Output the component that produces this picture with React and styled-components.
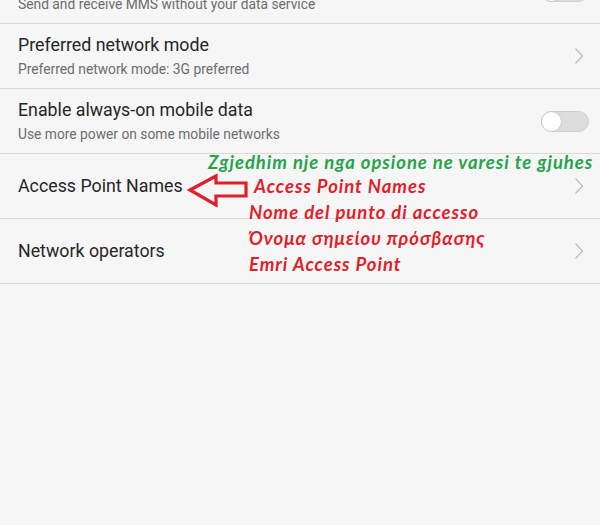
import React from "react";
import styled, { createGlobalStyle } from "styled-components";

const Global = createGlobalStyle`
  html, body { margin: 0; padding: 0; background: #ffffff; }
  body { font-family: Roboto, "Noto Sans", "Liberation Sans", sans-serif; }
`;

const Screen = styled.div`
  position: relative;
  width: 600px;
  height: 525px;
  background: #f6f6f6;
  overflow: hidden;
`;

const List = styled.div`
  display: flex;
  flex-direction: column;
  margin-top: -41px;
`;

const Row = styled.div`
  box-sizing: border-box;
  height: 65px;
  display: flex;
  align-items: center;
  justify-content: space-between;
  padding: 0 12px 0 18px;
  border-bottom: 1.5px solid #d9d9d9;
`;

const Texts = styled.div`
  display: flex;
  flex-direction: column;
  gap: ${(p) => (p.$sub ? "5px" : "0")};
`;

const Title = styled.div`
  font-size: 17.8px;
  line-height: 22px;
  min-height: 22px;
  color: #262626;
`;

const Subtitle = styled.div`
  font-size: 13.8px;
  line-height: 17px;
  color: #6d6d6d;
`;

const Toggle = styled.div`
  box-sizing: border-box;
  width: 48px;
  height: 21px;
  border-radius: 11px;
  background: #dcdcdc;
  border: 1px solid #cfcfcf;
  position: relative;
  margin-right: -1px;
`;

const Knob = styled.div`
  box-sizing: border-box;
  position: absolute;
  left: -1px;
  top: -1px;
  width: 21px;
  height: 21px;
  border-radius: 50%;
  background: #ffffff;
  border: 1px solid #c8c8c8;
`;

const ChevronSvg = styled.svg`
  margin-right: 4px;
`;

const Chevron = () => (
  <ChevronSvg width="10" height="18" viewBox="0 0 10 18">
    <path d="M1.5 1.5 L8.5 9 L1.5 16.5" fill="none" stroke="#bdbdbd" strokeWidth="1.3" />
  </ChevronSvg>
);

const Notes = styled.div`
  position: absolute;
  left: 186px;
  top: 151px;
  display: grid;
  grid-template-columns: 63px auto;
  grid-template-rows: 24px repeat(4, 26px);
  font-family: Lato, "Open Sans", sans-serif;
  font-style: italic;
  font-weight: 700;
  font-size: 18.5px;
  letter-spacing: 0.95px;
  line-height: 22px;
  white-space: nowrap;
`;

const Note = styled.div`
  grid-column: ${(p) => (p.$wide ? "1 / 3" : "2")};
  padding-left: ${(p) => p.$indent || 0}px;
  color: ${(p) => (p.$green ? "#27a44a" : "#e01f2b")};
`;

const Arrow = styled.svg`
  grid-column: 1;
  grid-row: 2 / 4;
  margin-top: -3px;
`;

const rows = [
  { title: "", sub: "Send and receive MMS without your data service", toggle: true },
  { title: "Preferred network mode", sub: "Preferred network mode: 3G preferred", chevron: true },
  { title: "Enable always-on mobile data", sub: "Use more power on some mobile networks", toggle: true },
  { title: "Access Point Names", chevron: true },
  { title: "Network operators", chevron: true },
];

export default function App() {
  return (
    <>
      <Global />
      <Screen>
        <List>
          {rows.map((r, i) => (
            <Row key={i}>
              <Texts $sub={!!r.sub}>
                <Title>{r.title}</Title>
                {r.sub && <Subtitle>{r.sub}</Subtitle>}
              </Texts>
              {r.toggle && (
                <Toggle>
                  <Knob />
                </Toggle>
              )}
              {r.chevron && <Chevron />}
            </Row>
          ))}
        </List>

        <Notes>
          <Note $green $wide $indent={22}>Zgjedhim nje nga opsione ne varesi te gjuhes</Note>
          <Arrow width="63" height="38" viewBox="0 0 63 38">
            <polygon
              points="4,18 30,4 30,11 60,11 60,24 30,24 30,33"
              fill="none"
              stroke="#e01f2b"
              strokeWidth="3.2"
              strokeLinejoin="miter"
            />
          </Arrow>
          <Note $indent={5}>Access Point Names</Note>
          <Note>Nome del punto di accesso</Note>
          <Note>Όνομα σημείου πρόσβασης</Note>
          <Note>Emri Access Point</Note>
        </Notes>
      </Screen>
    </>
  );
}
